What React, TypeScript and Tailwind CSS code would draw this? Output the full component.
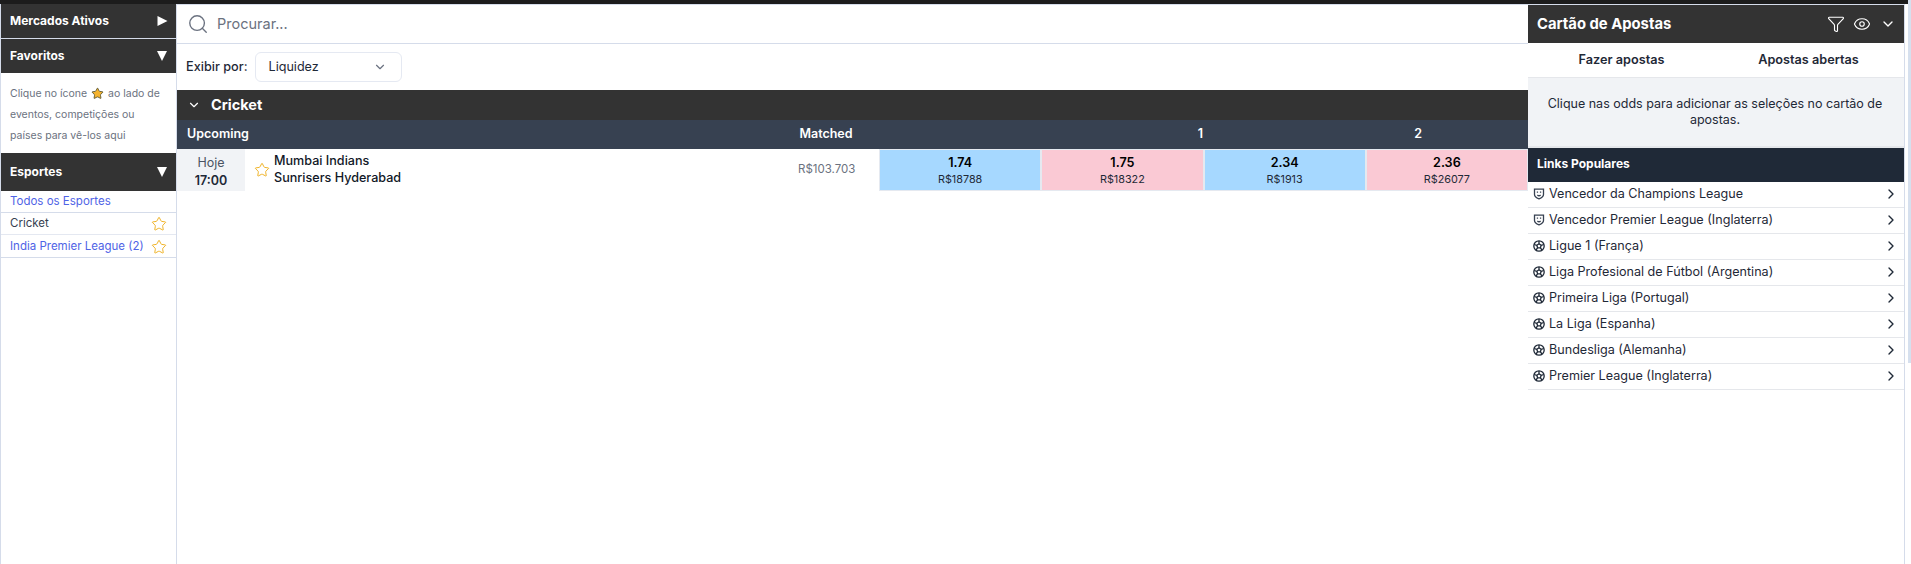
import React from 'react';
import { ChevronDown, ChevronRight, Eye, Funnel, Search, Star } from 'lucide-react';

const POPULAR_LINKS = [
  { label: 'Vencedor da Champions League', icon: 'shield' },
  { label: 'Vencedor Premier League (Inglaterra)', icon: 'shield' },
  { label: 'Ligue 1 (França)', icon: 'ball' },
  { label: 'Liga Profesional de Fútbol (Argentina)', icon: 'ball' },
  { label: 'Primeira Liga (Portugal)', icon: 'ball' },
  { label: 'La Liga (Espanha)', icon: 'ball' },
  { label: 'Bundesliga (Alemanha)', icon: 'ball' },
  { label: 'Premier League (Inglaterra)', icon: 'ball' },
];

const ODDS = [
  { price: '1.74', size: 'R$18788', back: true },
  { price: '1.75', size: 'R$18322', back: false },
  { price: '2.34', size: 'R$1913', back: true },
  { price: '2.36', size: 'R$26077', back: false },
];

const Triangle = ({ open }: { open: boolean }) => (
  <svg width="12" height="12" viewBox="0 0 12 12" className="shrink-0">
    {open ? <path d="M1 1h10L6 11z" fill="#fff" /> : <path d="M1.500 1l10 5-10 5z" fill="#fff" />}
  </svg>
);

const SideHeader = ({ title, open, tall }: { title: string; open: boolean; tall?: boolean }) => (
  <div className={`flex items-center justify-between bg-[#333333] pb-px pl-[9px] pr-2 text-xs font-bold text-white ${tall ? 'h-[38px]' : 'h-[34px]'}`}>
    <span>{title}</span>
    <Triangle open={open} />
  </div>
);

const ShieldIcon = () => (
  <svg width="12" height="12" viewBox="0 0 12 12" fill="none" stroke="#374151" strokeWidth="1.300" className="shrink-0">
    <path d="M1.500 1.200h9v5.300c0 2.300-2 3.500-4.500 4.400-2.500-.9-4.500-2.100-4.500-4.400z" />
    <path d="M3.800 4.200h1.300M6.900 4.200h1.300M4.400 7c.9.800 2.300.800 3.200 0" />
  </svg>
);

const BallIcon = () => (
  <svg width="12" height="12" viewBox="0 0 12 12" fill="none" stroke="#1f2937" strokeWidth="1.300" className="shrink-0">
    <circle cx="6" cy="6" r="5.200" />
    <path d="M6 3.700l2.200 1.600-.8 2.500H4.600l-.8-2.500zM6 3.700V1M8.200 5.300l2.600-.8M7.400 7.800l1.600 2.200M4.600 7.800L3 10M3.800 5.300l-2.600-.8" />
  </svg>
);

const App: React.FC = () => {
  return (
    <div className="flex h-[564px] w-[1911px] overflow-hidden bg-white font-['Inter',sans-serif] text-black">
      <div className="flex w-[1908px] shrink-0 flex-col">
        <div className="h-1 bg-[#1c1c1c]" />
        <div className="flex min-h-0 flex-1">
          {/* left menu */}
          <aside className="w-[177px] shrink-0 border-x border-[#d5dcea]">
            <SideHeader title="Mercados Ativos" open={false} />
            <div className="h-px bg-[#d5dcea]" />
            <SideHeader title="Favoritos" open />
            <div className="h-[80px] px-[9px] pt-[10px] text-[10.500px] leading-[21px] text-[#6b7280]">
              <div className="flex items-center gap-1">
                Clique no ícone
                <Star size={13} fill="#f5b32e" stroke="#4b4b2b" strokeWidth={1.500} />
                ao lado de
              </div>
              <div>eventos, competições ou</div>
              <div>países para vê-los aqui</div>
            </div>
            <SideHeader title="Esportes" open tall />
            <div className="flex h-[22px] items-center border-b border-[#d5dcea] pl-[9px] text-[11.500px] text-[#4f63e6]">Todos os Esportes</div>
            <div className="flex h-[22px] items-center justify-between border-b border-[#e4e8f1] px-[9px] pt-px text-[11.500px] text-[#374151]">
              Cricket
              <Star size={16} stroke="#f0b429" strokeWidth={1.500} />
            </div>
            <div className="flex h-[23px] items-center justify-between border-b border-[#d5dcea] px-[9px] pt-px text-[11.500px] text-[#4f63e6]">
              India Premier League (2)
              <Star size={16} stroke="#f0b429" strokeWidth={1.500} />
            </div>
          </aside>

          {/* main column */}
          <main className="min-w-0 flex-1">
            <div className="flex h-10 items-center gap-[8px] border-y border-[#d5dcea] pl-[10px]">
              <Search size={22} stroke="#6b7280" strokeWidth={1.500} />
              <span className="text-[14.500px] text-[#6b7280]">Procurar...</span>
            </div>
            <div className="flex h-[46px] items-center gap-[7px] pl-[9px]">
              <span className="text-[12.700px] font-medium text-[#1f2937]">Exibir por:</span>
              <div className="flex h-[30px] w-[147px] items-center justify-between rounded-md border border-[#e5e9f2] pl-[13px] pr-[14px] text-[12.600px] text-[#1f2937]">
                Liquidez
                <ChevronDown size={14} stroke="#6b7280" />
              </div>
            </div>
            <div className="flex h-[30px] items-center gap-[10px] bg-[#333333] pl-[10px] text-[14.500px] font-bold text-white">
              <ChevronDown size={14} stroke="#fff" strokeWidth={2} />
              Cricket
            </div>
            <div className="flex h-[29px] items-center bg-[#374151] text-[12.500px] font-semibold text-white">
              <span className="w-[622px] pl-[10px]">Upcoming</span>
              <span className="w-[54px] text-center">Matched</span>
              <span className="w-[350px] text-right">1</span>
              <span className="w-[219px] text-right">2</span>
            </div>
            <div className="flex h-[42px] items-stretch">
              <div className="flex w-[68px] shrink-0 flex-col items-center justify-center bg-[#f1f3f6] pt-1 leading-[18px]">
                <span className="text-[12.500px] text-[#4b5563]">Hoje</span>
                <span className="text-[12.500px] font-semibold text-[#1f2937]">17:00</span>
              </div>
              <div className="flex w-[553px] items-center gap-1 pl-[9px]">
                <Star size={16} stroke="#f0b429" strokeWidth={1.500} />
                <div className="pb-[2px] text-[12.600px] font-medium leading-[17px] text-[#111827]">
                  <div>Mumbai Indians</div>
                  <div>Sunrisers Hyderabad</div>
                </div>
              </div>
              <div className="flex w-[81px] items-center text-[11.500px] text-[#6b7280]">R$103.703</div>
              <div className="flex flex-1 gap-[2px] bg-[#e5e9f0] p-px">
                {ODDS.map((odd) => (
                  <div
                    key={odd.price}
                    className={`flex flex-1 flex-col items-center justify-center pt-px ${odd.back ? 'bg-[#a6d8ff]' : 'bg-[#fac9d4]'}`}
                  >
                    <span className="text-[12.600px] font-semibold leading-[18px]">{odd.price}</span>
                    <span className="text-[10.800px] leading-[15px] text-[#1f2937]">{odd.size}</span>
                  </div>
                ))}
              </div>
            </div>
          </main>

          {/* bet slip */}
          <aside className="flex w-[377px] shrink-0 flex-col border-r border-[#d5dcea]">
            <div className="flex h-[39px] items-center justify-between border-t border-[#d5dcea] bg-[#333333] pl-[9px] pr-2">
              <span className="text-[14.800px] font-bold text-white">Cartão de Apostas</span>
              <div className="flex items-center gap-2">
                <Funnel size={18} stroke="#fff" strokeWidth={1.500} />
                <Eye size={18} stroke="#fff" strokeWidth={1.500} />
                <ChevronDown size={16} stroke="#fff" className="ml-px" />
              </div>
            </div>
            <div className="flex h-[35px] items-center border-b border-[#e5e7eb] text-[12.700px] font-semibold text-[#1f2937]">
              <span className="flex-1 text-center">Fazer apostas</span>
              <span className="flex-1 pr-[2px] text-center">Apostas abertas</span>
            </div>
            <div className="flex h-[70px] items-center justify-center border-b-2 border-[#e5e7eb] bg-[#f1f3f6] pl-3 pr-[14px] text-center text-[12.500px] leading-4 text-[#1f2937]">
              Clique nas odds para adicionar as seleções no cartão de apostas.
            </div>
            <div className="flex h-[34px] items-center bg-[#1f2937] pb-[2px] pl-[9px] text-xs font-bold text-white">Links Populares</div>
            {POPULAR_LINKS.map((link) => (
              <div key={link.label} className="flex h-[26px] items-center gap-1 border-b border-[#e5e7eb] pb-px pl-[5px] pr-[5px] text-[12.600px] text-[#1f2937]">
                {link.icon === 'shield' ? <ShieldIcon /> : <BallIcon />}
                <span className="flex-1">{link.label}</span>
                <ChevronRight size={16} stroke="#1f2937" />
              </div>
            ))}
          </aside>
          <div className="w-[3px] shrink-0" />
        </div>
      </div>
      {/* page scrollbar */}
      <div className="h-[363px] w-[3px] shrink-0 bg-[#d6e0ee]" />
    </div>
  );
};

export default App;
